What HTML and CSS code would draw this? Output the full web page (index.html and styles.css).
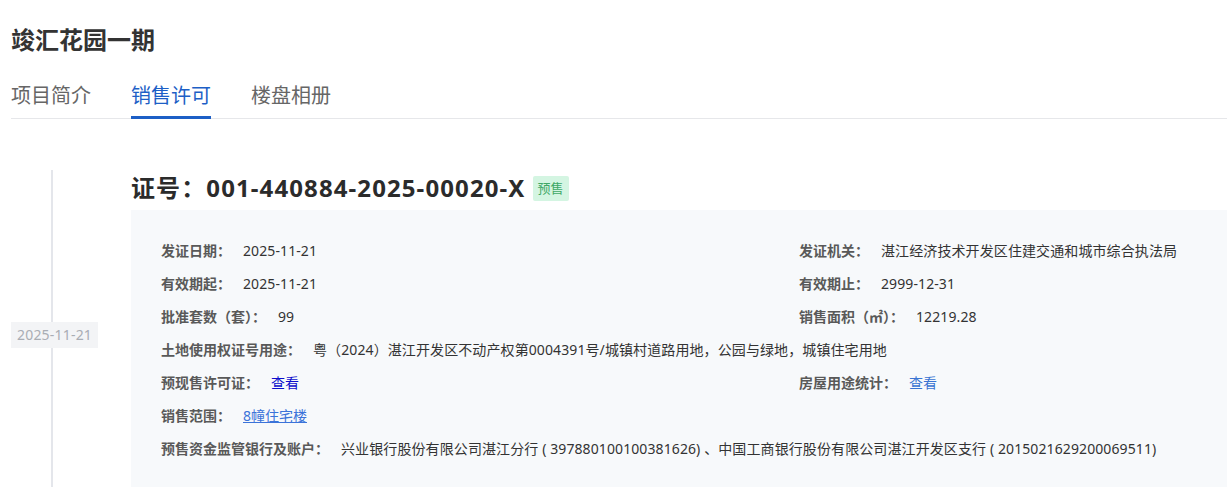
FILE: index.html
```html
<!DOCTYPE html>
<html lang="zh-CN">
<head>
    <meta charset="UTF-8">
    <meta name="viewport" content="width=device-width, initial-scale=1.0">
    <title>竣汇花园一期 - 销售许可</title>
    <link rel="stylesheet" href="styles.css">
</head>
<body>
    <div class="page">
        <h1 class="title">竣汇花园一期</h1>

        <div class="tabs">
            <a class="tab" href="#">项目简介</a>
            <a class="tab active" href="#">销售许可</a>
            <a class="tab" href="#">楼盘相册</a>
        </div>

        <div class="timeline">
            <div class="tl-item">
                <div class="tl-side">
                    <span class="tl-date">2025-11-21</span>
                </div>
                <div class="tl-body">
                    <h2 class="cert-title">证号：001-440884-2025-00020-X<span class="tag">预售</span></h2>
                    <div class="cert-box">
                        <div class="field"><span class="label">发证日期：</span><span class="value">2025-11-21</span></div>
                        <div class="field"><span class="label">发证机关：</span><span class="value">湛江经济技术开发区住建交通和城市综合执法局</span></div>

                        <div class="field"><span class="label">有效期起：</span><span class="value">2025-11-21</span></div>
                        <div class="field"><span class="label">有效期止：</span><span class="value">2999-12-31</span></div>

                        <div class="field"><span class="label">批准套数（套）：</span><span class="value">99</span></div>
                        <div class="field"><span class="label">销售面积（㎡）：</span><span class="value">12219.28</span></div>

                        <div class="field full"><span class="label">土地使用权证号用途：</span><span class="value">粤（2024）湛江开发区不动产权第0004391号/城镇村道路用地，公园与绿地，城镇住宅用地</span></div>

                        <div class="field"><span class="label">预现售许可证：</span><a class="link-dark" href="#">查看</a></div>
                        <div class="field"><span class="label">房屋用途统计：</span><a class="link" href="#">查看</a></div>

                        <div class="field full"><span class="label">销售范围：</span><a class="link-under" href="#">8幢住宅楼</a></div>

                        <div class="field full"><span class="label">预售资金监管银行及账户：</span><span class="value">兴业银行股份有限公司湛江分行 ( 397880100100381626) 、中国工商银行股份有限公司湛江开发区支行 ( 2015021629200069511)</span></div>
                    </div>
                </div>
            </div>
        </div>
    </div>
</body>
</html>
```

FILE: styles.css
```css
body {
    margin: 0;
    font-family: "Noto Sans", "Noto Sans CJK SC", sans-serif;
    color: #333;
    background: #fff;
    overflow: hidden;
}
.page {
    padding: 24px 0 0 11px;
}
.title {
    margin: 0;
    font-size: 24px;
    line-height: 32px;
    font-weight: bold;
    color: #333;
}

/* tabs */
.tabs {
    display: flex;
    gap: 40px;
    margin-top: 26px;
    border-bottom: 1px solid #e6e7ea;
}
.tab {
    display: block;
    font-size: 20px;
    line-height: 28px;
    padding-bottom: 6px;
    margin-bottom: -1px;
    border-bottom: 3px solid transparent;
    color: #666;
    text-decoration: none;
}
.tab.active {
    color: #1d5fc6;
    border-bottom-color: #1d5fc6;
}

/* timeline */
.timeline {
    margin-top: 51px;
}
.tl-item {
    display: flex;
}
.tl-side {
    position: relative;
    width: 120px;
    flex-shrink: 0;
    display: flex;
    align-items: center;
}
.tl-side::before {
    content: "";
    position: absolute;
    left: 40px;
    top: 0;
    bottom: 0;
    width: 2px;
    background: #e4e6eb;
}
.tl-date {
    position: relative; /* sits over the line */
    font-size: 14px;
    line-height: 20px;
    padding: 3px 6px;
    letter-spacing: 0.2px;
    color: #a9adb4;
    background: #f3f4f6;
}
.tl-body {
    flex: 1;
}
.cert-title {
    margin: 0 0 4px;
    font-size: 24px;
    line-height: 36px;
    font-weight: bold;
    color: #2b2b2b;
    letter-spacing: 1.1px;
    display: flex;
    align-items: center;
}
.tag {
    margin-left: 7px;
    font-size: 13px;
    line-height: 17px;
    font-weight: normal;
    letter-spacing: 0;
    padding: 4px 5px;
    border-radius: 2px;
    color: #3fa866;
    background: #d4f5e2;
}

/* info box */
.cert-box {
    background: #f7f9fb;
    padding: 30px 0 40px 30px;
    display: grid;
    grid-template-columns: 638px 1fr;
    row-gap: 11px;
}
.field {
    font-size: 14px;
    line-height: 22px;
    white-space: nowrap;
}
.field.full {
    grid-column: 1 / -1;
}
.label {
    font-weight: bold;
    color: #595959;
    margin-right: 12px;
}
.value {
    color: #333;
    letter-spacing: 0.1px;
}
.link-dark {
    color: #0d0dcc;
    text-decoration: none;
}
.link {
    color: #3a74d2;
    text-decoration: none;
}
.link-under {
    color: #3b73d9;
    text-decoration: underline;
}
```
